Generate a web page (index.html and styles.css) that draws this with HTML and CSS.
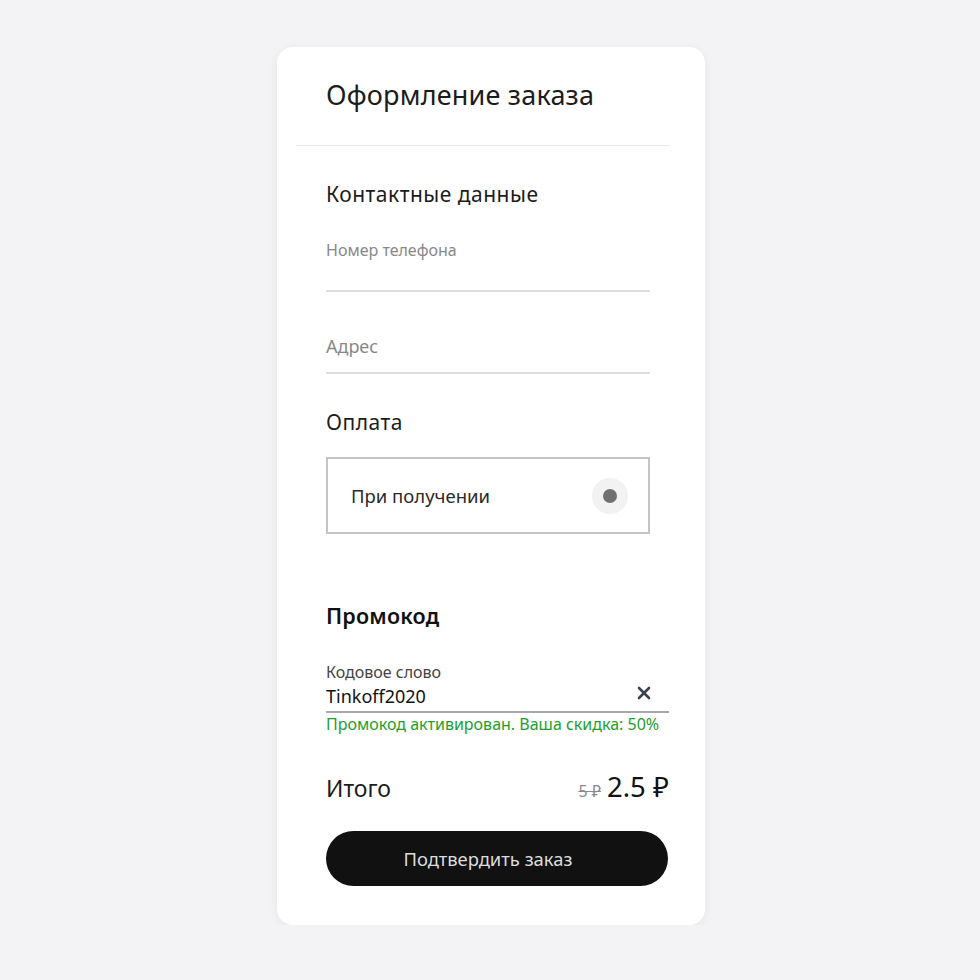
FILE: index.html
```html
<!DOCTYPE html>
<html lang="ru">
<head>
<meta charset="utf-8">
<title>Оформление заказа</title>
<link rel="stylesheet" href="styles.css">
</head>
<body>
<main class="card">
  <header class="card-head">
    <h1 class="title">Оформление заказа</h1>
  </header>
  <div class="card-body">
    <section class="contacts">
      <h2 class="section-title">Контактные данные</h2>
      <div class="field field-phone"><span class="placeholder small">Номер телефона</span></div>
      <div class="field field-address"><span class="placeholder">Адрес</span></div>
    </section>
    <section class="payment">
      <h2 class="section-title">Оплата</h2>
      <div class="pay-option">
        <span class="pay-label">При получении</span>
        <span class="radio"><span class="radio-dot"></span></span>
      </div>
    </section>
    <section class="promo">
      <h2 class="section-title bold">Промокод</h2>
      <div class="promo-field">
        <span class="promo-label">Кодовое слово</span>
        <div class="promo-row">
          <span class="promo-value">Tinkoff2020</span>
          <svg class="clear" width="14" height="14" viewBox="0 0 14 14"><path d="M2 2 L12 12 M12 2 L2 12" stroke="#3b4352" stroke-width="2.6" stroke-linecap="round"/></svg>
        </div>
      </div>
      <p class="promo-ok">Промокод активирован. Ваша скидка: 50%</p>
    </section>
    <div class="total">
      <span class="total-label">Итого</span>
      <span class="price"><s class="old">5 ₽</s><span class="new">2.5 ₽</span></span>
    </div>
    <button class="confirm">Подтвердить заказ</button>
  </div>
</main>
</body>
</html>
```
FILE: styles.css
```css
* { box-sizing: border-box; }
html, body { margin: 0; padding: 0; }
body {
  background: #f3f3f5;
  font-family: "Noto Sans", "Open Sans", sans-serif;
  color: #1a1a1a;
  padding-top: 47px;
}
.card {
  width: 428px;
  margin: 0 auto 0 277px;
  background: #fff;
  border-radius: 16px;
  box-shadow: 0 2px 10px rgba(0,0,0,0.06);
  padding: 0 36px 39px 19px;
}
.card-head {
  border-bottom: 1px solid #ececec;
  padding: 30px 0 32px 30px;
}
.title {
  margin: 0;
  font-size: 27px;
  font-weight: 400;
  letter-spacing: 0.2px;
  line-height: 36px;
  color: #1c1c1c;
}
.card-body {
  padding-left: 30px;
}
.section-title {
  margin: 0;
  font-size: 21px;
  font-weight: 400;
  letter-spacing: 0.5px;
  line-height: 28px;
  color: #1c1c1c;
}
.section-title.bold { font-weight: 600; font-size: 21.5px; letter-spacing: 0.2px; color: #111; }
.contacts { padding-top: 34px; }
.field {
  width: 324px;
  border-bottom: 2px solid #dedede;
  position: relative;
}
.field-phone { height: 84px; padding-top: 32px; }
.field-address { height: 61px; margin-top: 21px; padding-top: 21px; }
.placeholder { display: block; color: #888; font-size: 18px; line-height: 24px; }
.placeholder.small { font-size: 16px; line-height: 20px; }
.payment { padding-top: 34px; }
.pay-option {
  width: 324px;
  height: 77px;
  margin-top: 21px;
  border: 2px solid #c4c4c4;
  display: flex;
  align-items: center;
  justify-content: space-between;
  padding: 0 20px 0 23px;
}
.pay-label { font-size: 18.5px; color: #2a2a2a; }
.radio {
  width: 36px; height: 36px;
  border-radius: 50%;
  background: #f2f2f2;
  display: flex; align-items: center; justify-content: center;
}
.radio-dot { width: 14px; height: 14px; border-radius: 50%; background: #707070; }
.promo { padding-top: 68px; }
.promo-field {
  margin-top: 31px;
  border-bottom: 2px solid #a9a9a9;
  padding-bottom: 3px;
}
.promo-label { display: block; font-size: 16px; line-height: 23px; color: #444; }
.promo-row { display: flex; justify-content: space-between; align-items: center; padding-right: 18px; }
.promo-value { font-size: 18px; line-height: 24px; color: #111; }
.clear { margin-top: -6px; }
.promo-ok { margin: 1px 0 0; font-size: 16px; line-height: 20px; color: #1e9e2c; }
.total {
  margin-top: 34px;
  display: flex;
  justify-content: space-between;
  align-items: baseline;
}
.total-label { font-size: 23px; color: #1c1c1c; }
.price { display: flex; align-items: baseline; gap: 6px; }
.old { font-size: 16px; color: #8a8a8a; }
.new { font-size: 27.5px; color: #111; }
.confirm {
  display: block;
  margin-top: 26px;
  width: 342px;
  height: 55px;
  border: none;
  border-radius: 28px;
  background: #111;
  color: #ddd;
  font-family: "Noto Sans", "Open Sans", sans-serif;
  font-size: 18.4px;
  padding: 0 18px 0 0;
}
```
